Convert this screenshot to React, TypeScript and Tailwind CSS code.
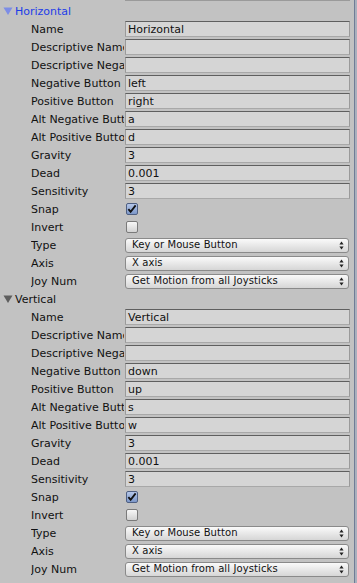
import React from "react";

type Row =
  | { kind: "text"; label: string; value: string }
  | { kind: "check"; label: string; checked: boolean }
  | { kind: "select"; label: string; value: string };

const makeRows = (name: string, neg: string, pos: string, altNeg: string, altPos: string): Row[] => [
  { kind: "text", label: "Name", value: name },
  { kind: "text", label: "Descriptive Name", value: "" },
  { kind: "text", label: "Descriptive Negative Name", value: "" },
  { kind: "text", label: "Negative Button", value: neg },
  { kind: "text", label: "Positive Button", value: pos },
  { kind: "text", label: "Alt Negative Button", value: altNeg },
  { kind: "text", label: "Alt Positive Button", value: altPos },
  { kind: "text", label: "Gravity", value: "3" },
  { kind: "text", label: "Dead", value: "0.001" },
  { kind: "text", label: "Sensitivity", value: "3" },
  { kind: "check", label: "Snap", checked: true },
  { kind: "check", label: "Invert", checked: false },
  { kind: "select", label: "Type", value: "Key or Mouse Button" },
  { kind: "select", label: "Axis", value: "X axis" },
  { kind: "select", label: "Joy Num", value: "Get Motion from all Joysticks" },
];

function Triangle({ color }: { color: string }) {
  return (
    <svg width="10" height="8" viewBox="0 0 10 8" className="shrink-0">
      <path d="M0.5 0.5 L9.5 0.5 L5 8 Z" fill={color} />
    </svg>
  );
}

function Header({ title, active }: { title: string; active?: boolean }) {
  return (
    <div className="flex h-[18px] shrink-0 items-center pl-[3px]">
      <Triangle color={active ? "#7d8de6" : "#5e5e5e"} />
      <span className={"ml-[2px] " + (active ? "text-[#1d3de8]" : "text-[#111]")}>{title}</span>
    </div>
  );
}

function Field({ row }: { row: Row }) {
  if (row.kind === "text") {
    return (
      <div className="flex h-[16px] w-[225px] shrink-0 items-center border border-[#9a9a9a] border-t-[#5f5f5f] border-b-[#a8a8a8] bg-[#d5d5d5] pl-[2px] text-[#111]">
        {row.value}
      </div>
    );
  }
  if (row.kind === "check") {
    return row.checked ? (
      <div className="ml-[1px] flex h-[12px] w-[12px] shrink-0 items-center justify-center rounded-[2px] border border-[#4e5f82] bg-gradient-to-b from-[#b4c6e8] to-[#7d98c9]">
        <svg width="11" height="10" viewBox="0 0 11 10">
          <path d="M1.5 5.2 L4 8 L9.5 1" fill="none" stroke="#111" strokeWidth="2" />
        </svg>
      </div>
    ) : (
      <div className="ml-[1px] h-[12px] w-[12px] shrink-0 rounded-[2px] border border-[#7a7a7a] bg-gradient-to-b from-[#f7f7f7] to-[#d2d2d2]" />
    );
  }
  return (
    <div className="flex h-[15px] w-[224px] shrink-0 items-center justify-between rounded-[3px] border border-[#8a8a8a] bg-gradient-to-b from-[#fafafa] to-[#d6d6d6] pl-[6px] pr-[4px] text-[10px] tracking-[0.1px] text-[#111]">
      <span>{row.value}</span>
      <svg width="5" height="9" viewBox="0 0 5 9">
        <path d="M2.5 0.5 L4.6 3.5 L0.4 3.5 Z" fill="#222" />
        <path d="M2.5 8.5 L4.6 5.5 L0.4 5.5 Z" fill="#222" />
      </svg>
    </div>
  );
}

function Section({ title, active, rows }: { title: string; active?: boolean; rows: Row[] }) {
  return (
    <div className="flex shrink-0 flex-col">
      <Header title={title} active={active} />
      {rows.map((r, i) => (
        <div key={i} className="flex h-[18px] shrink-0 items-center">
          <div className="ml-[31px] mr-[1px] w-[93px] shrink-0 overflow-hidden whitespace-nowrap text-[#111]">
            {r.label}
          </div>
          <Field row={r} />
        </div>
      ))}
    </div>
  );
}

export default function App() {
  return (
    <div
      className="flex h-[583px] w-[357px] overflow-hidden bg-[#c2c2c2] text-[11px] leading-none"
      style={{ fontFamily: '"DejaVu Sans", "Liberation Sans", sans-serif' }}
    >
      <div className="flex w-[354px] shrink-0 flex-col">
        <div className="ml-[125px] h-[1px] w-[225px] shrink-0 bg-[#9a9a9a]" />
        <div className="h-[1px] shrink-0" />
        <Section title="Horizontal" active rows={makeRows("Horizontal", "left", "right", "a", "d")} />
        <Section title="Vertical" rows={makeRows("Vertical", "down", "up", "s", "w")} />
        <Section title="Fire1" rows={[]} />
      </div>
      <div className="w-[1px] shrink-0 bg-[#6f7c96]" />
      <div className="w-[2px] shrink-0 bg-[#a9b0bd]" />
    </div>
  );
}
